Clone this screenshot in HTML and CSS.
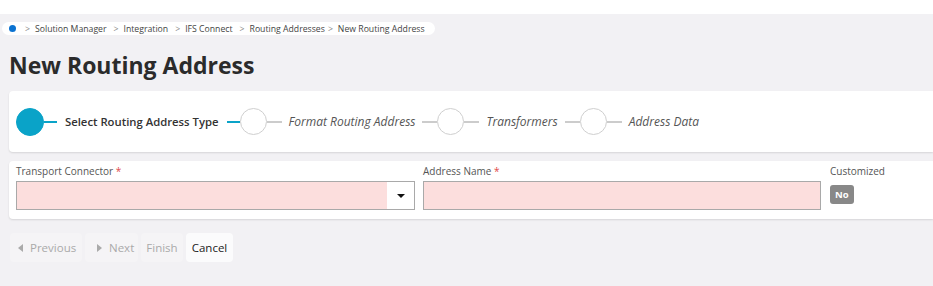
FILE: index.html
```html
<!DOCTYPE html>
<html lang="en">
<head>
  <meta charset="UTF-8">
  <title>New Routing Address</title>
  <link rel="stylesheet" href="styles.css">
</head>
<body>
  <div class="topbar"></div>
  <div class="page">
    <nav class="breadcrumb">
      <span class="home-dot"></span>
      <span class="sep">&gt;</span><span>Solution Manager</span>
      <span class="sep">&gt;</span><span>Integration</span>
      <span class="sep">&gt;</span><span>IFS Connect</span>
      <span class="sep">&gt;</span><span>Routing Addresses</span>
      <span class="sep tight">&gt;</span><span>New Routing Address</span>
    </nav>

    <h1>New Routing Address</h1>

    <div class="card stepper">
      <div class="step active">
        <span class="circle"></span><span class="line"></span>
        <span class="label">Select Routing Address Type</span>
        <span class="line"></span>
      </div>
      <div class="step">
        <span class="circle"></span><span class="line"></span>
        <span class="label">Format Routing Address</span>
        <span class="line"></span>
      </div>
      <div class="step">
        <span class="circle"></span><span class="line"></span>
        <span class="label">Transformers</span>
        <span class="line"></span>
      </div>
      <div class="step">
        <span class="circle"></span><span class="line"></span>
        <span class="label">Address Data</span>
      </div>
    </div>

    <div class="card form">
      <div class="field field-connector">
        <label>Transport Connector <span class="req">*</span></label>
        <div class="input select">
          <span class="select-btn"><span class="caret"></span></span>
        </div>
      </div>
      <div class="field field-name">
        <label>Address Name <span class="req">*</span></label>
        <div class="input"></div>
      </div>
      <div class="field field-custom">
        <label>Customized</label>
        <span class="badge">No</span>
      </div>
    </div>

    <div class="actions">
      <button class="btn btn-prev" disabled><span class="tri left"></span>Previous</button>
      <button class="btn btn-next" disabled><span class="tri right"></span>Next</button>
      <button class="btn btn-finish" disabled>Finish</button>
      <button class="btn btn-cancel">Cancel</button>
    </div>
  </div>
</body>
</html>
```

FILE: styles.css
```css
:root {
  --color-bg: #f2f1f4;
  --color-teal: #0aa3c8;
  --color-text: #333333;
  --color-muted: #666666;
  --color-line: #cccccc;
  --color-invalid: #fcdedd;
}

* {
  margin: 0;
  padding: 0;
  box-sizing: border-box;
}

body {
  background: var(--color-bg);
  font-family: 'Open Sans', 'Noto Sans', sans-serif;
  color: var(--color-text);
  overflow: hidden;
}

.topbar {
  height: 14px;
  background: white;
}

.page {
  padding: 8px 0 0 9px;
}

/* breadcrumb */
.breadcrumb {
  display: flex;
  align-items: center;
  width: fit-content;
  height: 13px;
  margin-left: -7px;
  padding: 0 10px 0 7px;
  background: white;
  border-radius: 7px;
  font-size: 8.7px;
  color: #444;
  white-space: nowrap;
}

.home-dot {
  width: 7px;
  height: 7px;
  border-radius: 50%;
  background: #0b72d1;
}

.sep {
  color: #888;
  margin: 0 5px 0 7px;
}

.sep.tight {
  margin-left: 3px;
}

.breadcrumb .home-dot + .sep {
  margin-left: 9px;
}

h1 {
  font-size: 23px;
  font-weight: 700;
  color: #2b2b2b;
  line-height: 30px;
  margin: 15px 0 11px;
}

/* cards */
.card {
  background: white;
  border-radius: 4px 0 0 4px;
  box-shadow: 0 1px 2px rgba(0, 0, 0, 0.12);
}

.stepper {
  display: flex;
  align-items: center;
  height: 61px;
  padding-left: 7px;
}

.step {
  display: flex;
  align-items: center;
}

.circle {
  width: 27px;
  height: 27px;
  border-radius: 50%;
  border: 1px solid #cfcfcf;
  background: white;
}

.line {
  width: 15px;
  height: 2px;
  background: var(--color-line);
}

.step .label {
  font-size: 12px;
  font-style: italic;
  color: #555;
  margin: 0 7px 0 7px;
}

.step.active .circle {
  width: 28px;
  height: 28px;
  border-color: var(--color-teal);
  background: var(--color-teal);
}

.step.active .line {
  width: 13px;
  background: var(--color-teal);
}

.step.active .label {
  font-size: 11.3px;
  font-style: normal;
  font-weight: 600;
  color: #333;
  margin: 0 8px;
}

/* form */
.form {
  display: flex;
  margin-top: 9px;
  height: 58px;
  padding: 3px 0 0 7px;
}

.field label {
  display: block;
  font-size: 10px;
  color: #555;
  line-height: 15px;
  margin-bottom: 2px;
}

.req {
  color: #e04848;
}

.input {
  height: 29px;
  border: 1px solid #a9a9a9;
  background: var(--color-invalid);
}

.field-connector {
  width: 399px;
}

.field-name {
  width: 398px;
  margin-left: 8px;
}

.field-custom {
  margin-left: 9px;
}

.select {
  display: flex;
  justify-content: flex-end;
}

.select-btn {
  width: 27px;
  height: 100%;
  background: white;
  display: flex;
  align-items: center;
  justify-content: center;
}

.caret {
  width: 0;
  height: 0;
  border-left: 4px solid transparent;
  border-right: 4px solid transparent;
  border-top: 4px solid #111;
}

.badge {
  display: inline-block;
  margin-top: 3px;
  padding: 0 5px;
  height: 19px;
  line-height: 19px;
  border-radius: 3px;
  background: #888888;
  color: white;
  font-size: 9.5px;
  font-weight: 700;
}

/* buttons */
.actions {
  display: flex;
  gap: 3px;
  margin: 14px 0 0 1px;
}

.btn {
  height: 29px;
  padding: 0 7px;
  border: none;
  border-radius: 4px;
  background: #f5f4f6;
  font-family: inherit;
  font-size: 11.5px;
  color: #aaaaaa;
  display: flex;
  align-items: center;
}

.btn-prev {
  width: 72px;
  padding: 0 0 0 8px;
}

.btn-next {
  width: 53px;
  padding: 0 0 0 12px;
}

.btn-finish {
  width: 42px;
  justify-content: center;
  padding: 0;
}

.btn-cancel {
  width: 47px;
  justify-content: center;
  padding: 0;
  background: #fbfbfc;
  color: #222;
}

.tri {
  width: 0;
  height: 0;
  margin-right: 7px;
  border-top: 4px solid transparent;
  border-bottom: 4px solid transparent;
}

.tri.left {
  border-right: 5px solid #aaa;
}

.tri.right {
  border-left: 5px solid #aaa;
}
```
